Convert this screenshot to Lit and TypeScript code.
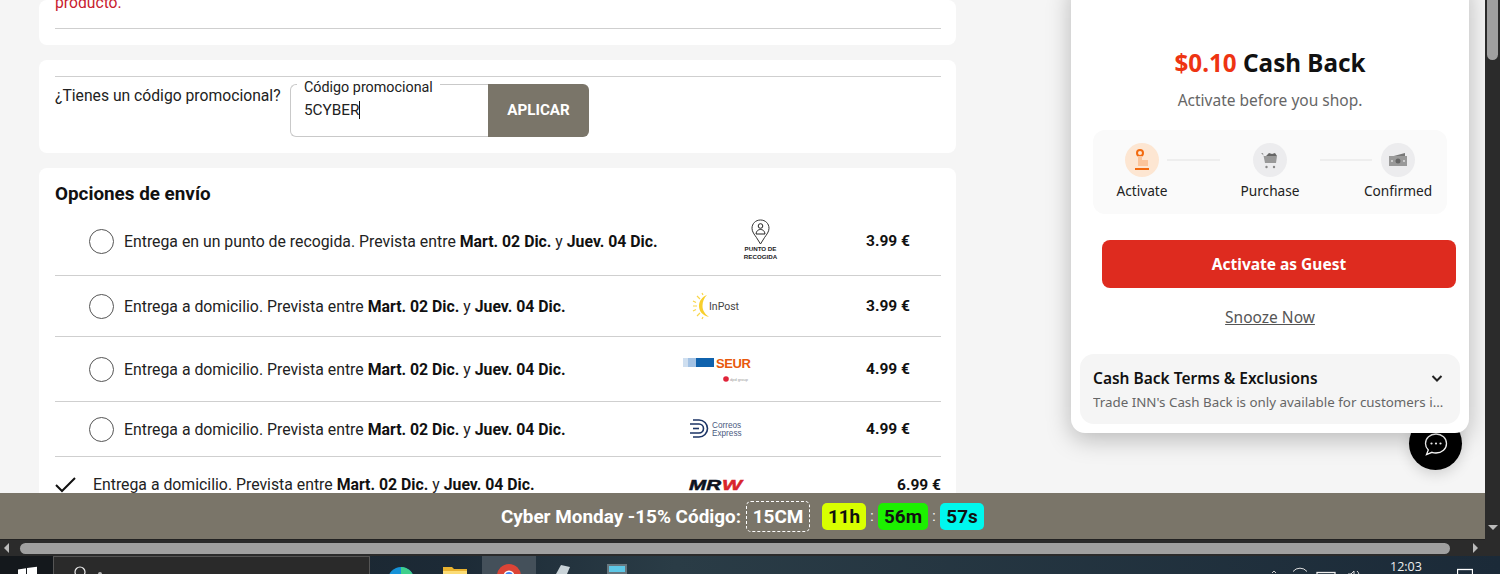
import { LitElement, html, css } from "lit";
import { customElement } from "lit/decorators.js";

const pin = html`<svg class="logo" width="66" height="58" viewBox="0 0 66 58">
  <path d="M31.500 8c-5 0-8.500 3.700-8.500 8.300 0 3.400 2.400 6.300 4.300 9l4.200 6.700 4.200-6.700c1.900-2.700 4.300-5.600 4.300-9C40 11.700 36.500 8 31.500 8z" fill="none" stroke="#333" stroke-width="1"/>
  <circle cx="31.500" cy="14" r="2.300" fill="none" stroke="#222" stroke-width="1"/>
  <path d="M27 22c.5-3.500 2.500-4.500 4.500-4.500s4 1 4.500 4.500z" fill="none" stroke="#222" stroke-width="1"/>
  <text x="31.500" y="39" class="pintx">PUNTO DE</text>
  <text x="31.500" y="47" class="pintx">RECOGIDA</text>
</svg>`;

const inpost = html`<svg class="logo" width="66" height="50" viewBox="0 0 66 50">
  <path d="M24 14c-5 2-8 6-8 11s3 9 10 11c-4-3-6.500-6.500-6.500-11S21 17 24 14z" fill="#f8cf2c"/>
  <path d="M14 15l3 3M10 20l3 1.500M10 25h4M10 30l3-1.500M14 35l3-3M19 38l1-2M19 12l1 2" stroke="#f9d64a" stroke-width="1.200" fill="none"/>
  <text x="26" y="29" class="intx">InPost</text>
</svg>`;

const seur = html`<svg class="logo" width="66" height="54" viewBox="0 0 66 54">
  <rect x="0" y="16" width="5" height="9" fill="#cfdff0"/>
  <rect x="5" y="16" width="8" height="9" fill="#a3c2e4"/>
  <rect x="13" y="16" width="18" height="9" fill="#0f62ad"/>
  <text x="33" y="26" class="setx">SEUR</text>
  <circle cx="43" cy="37" r="2.800" fill="#e0243a"/>
  <text x="47" y="38.500" class="geotx">dpd group</text>
</svg>`;

const correos = html`<svg class="logo" width="52" height="44" viewBox="0 0 52 44">
  <g fill="none" stroke="#1c3566" stroke-width="1.600">
    <path d="M3 13h6a8.500 8.500 0 010 17H3"/>
    <path d="M0 17h9a4.500 4.500 0 010 9H0"/>
    <path d="M3 21.500h6"/>
  </g>
  <text x="22" y="21" class="cotx">Correos</text>
  <text x="22" y="29" class="cotx">Express</text>
</svg>`;

const mrw = html`<svg class="logo" width="54" height="12" viewBox="0 0 54 12">
  <text x="0" y="11" class="mrtx" textLength="32" lengthAdjust="spacingAndGlyphs">MR</text>
  <text x="33" y="11" class="mrtx red" textLength="20" lengthAdjust="spacingAndGlyphs">W</text>
</svg>`;

interface Ship { pre: string; price: string; logo: unknown; }

const ships: Ship[] = [
  { pre: "Entrega en un punto de recogida. Prevista entre", price: "3.99 €", logo: pin },
  { pre: "Entrega a domicilio. Prevista entre", price: "3.99 €", logo: inpost },
  { pre: "Entrega a domicilio. Prevista entre", price: "4.99 €", logo: seur },
  { pre: "Entrega a domicilio. Prevista entre", price: "4.99 €", logo: correos },
];

const dates = html`<b>Mart. 02 Dic.</b> y <b>Juev. 04 Dic.</b>`;

@customElement("app-root")
export class AppRoot extends LitElement {
  static styles = css`
    :host { display: block; width: 1500px; height: 574px; overflow: hidden; font-family: Roboto, "Liberation Sans", sans-serif; color: #111; }
    .screen { display: flex; flex-direction: column; height: 574px; background: #1c262e; }
    .upper { display: flex; height: 540px; }
    .page { width: 1485px; display: flex; flex-direction: column; }
    .main { position: relative; height: 493px; overflow: hidden; background: #f5f5f5; padding-left: 39px; box-sizing: border-box; display: flex; flex-direction: column; gap: 15px; }
    .card { width: 917px; background: #fff; border-radius: 8px; box-sizing: border-box; padding: 0 15px 0 16px; flex: none; }
    .c1 { height: 45px; display: flex; flex-direction: column; justify-content: flex-end; padding-bottom: 16px; }
    .err { color: #c8202e; font-size: 15.700px; line-height: 17px; margin-bottom: 17px; }
    .rule { height: 1px; background: #cfcfcf; flex: none; }
    .c2 { height: 93px; padding-top: 16px; }
    .promo { display: flex; margin-top: 7px; }
    .promo-label { font-size: 15.700px; line-height: 24px; width: 235px; flex: none; white-space: nowrap; color: #222; }
    .field { position: relative; width: 198px; height: 53px; box-sizing: border-box; border: 1px solid #c9c9c9; border-right: none; border-radius: 6px 0 0 6px; font-size: 15.300px; padding: 15px 13px 0; line-height: 20px; color: #222; }
    .legend { position: absolute; top: -6px; left: 6px; padding: 0 7px; background: #fff; font-size: 14.330px; line-height: 16px; color: #222; white-space: nowrap; }
    .caret { display: inline-block; width: 1px; height: 18px; background: #111; vertical-align: -4px; }
    .apply { width: 101px; height: 53px; box-sizing: border-box; padding-bottom: 1px; background: #7a7569; color: #fff; font-weight: 700; font-size: 15.200px; border-radius: 0 6px 6px 0; display: flex; align-items: center; justify-content: center; }
    .c3 { height: 340px; }
    .c3 h2 { margin: 0; padding-top: 16px; height: 23px; font-size: 18.850px; line-height: 20px; font-weight: 700; color: #111; }
    .row { display: flex; align-items: center; padding: 5px 31px 5px 34px; border-bottom: 1px solid #cfcfcf; font-size: 15.820px; color: #222; }
    .row b { color: #111; }
    .radio { width: 25px; height: 25px; box-sizing: border-box; border: 1px solid #555; border-radius: 50%; margin-right: 10px; flex: none; }
    .desc { white-space: nowrap; flex: none; }
    .logo-cell { flex: 1; display: flex; justify-content: center; align-items: center; min-width: 0; }
    .logo { display: block; overflow: visible; }
    .price { font-weight: 700; font-size: 15.500px; white-space: nowrap; flex: none; color: #111; }
    .row.sel { border: none; padding: 18px 0 0; }
    .check { width: 38px; flex: none; display: block; }
    .pintx { font: 700 6.200px "Liberation Sans", sans-serif; text-anchor: middle; fill: #222; }
    .intx { font: 10.500px Roboto, sans-serif; fill: #444; }
    .setx { font: 700 13px "Liberation Sans", sans-serif; fill: #e8590c; letter-spacing: -0.4px; }
    .geotx { font: 4px "Liberation Sans", sans-serif; fill: #999; }
    .cotx { font: 8.200px "Liberation Sans", sans-serif; fill: #4a5a80; }
    .mrtx { font: italic 700 15px "Liberation Sans", sans-serif; fill: #0c1220; stroke: #0c1220; stroke-width: .5px; }
    .mrtx.red { fill: #d8242c; stroke: #d8242c; }

    .pop { position: absolute; left: 1071px; top: -20px; width: 398px; height: 453px; box-sizing: border-box; background: #fff; border-radius: 14px; box-shadow: 0 6px 24px rgba(0,0,0,.25); font-family: "Noto Sans", "Open Sans", sans-serif; padding: 63px 9px 9px; display: flex; flex-direction: column; z-index: 2; }
    .pop h3 { margin: 0; height: 40px; line-height: 40px; font-size: 24.250px; font-weight: 700; text-align: center; color: #111; }
    .pop h3 span { color: #ee3412; }
    .sub { margin-top: 6px; text-align: center; font-size: 15.500px; line-height: 22px; color: #666; }
    .steps { margin: 19px 13px 0; height: 84px; background: #fafafa; border-radius: 12px; display: flex; padding: 13px 0 0 14px; box-sizing: border-box; }
    .step { width: 70px; flex: none; display: flex; flex-direction: column; align-items: center; gap: 4px; font-size: 13.700px; line-height: 20px; color: #222; white-space: nowrap; }
    .step.s2 { margin-left: 15px; }
    .step.s3 { margin-left: -9px; }
    .dot { width: 34px; height: 34px; border-radius: 50%; background: #ececee; display: flex; align-items: center; justify-content: center; }
    .dot.on { background: #fde6d2; }
    .link { height: 2px; background: #eeeeee; margin-top: 16px; flex: none; }
    .link.l1 { width: 53px; margin-left: -10px; }
    .link.l2 { width: 52px; margin-left: 15px; }
    .cta { margin: 26px 4px 0 22px; height: 48px; background: #de2b1f; border-radius: 8px; display: flex; align-items: center; justify-content: center; color: #fff; font-weight: 700; font-size: 15.500px; }
    .snooze { margin-top: 18px; text-align: center; font-size: 15.500px; line-height: 22px; color: #555; text-decoration: underline; }
    .terms { margin-top: 26px; height: 70px; box-sizing: border-box; background: #f5f5f5; border-radius: 14px; padding: 13px 13px 0; }
    .terms-head { display: flex; justify-content: space-between; align-items: center; font-weight: 600; font-size: 15.500px; line-height: 22px; color: #111; }
    .terms p { margin: 4px 0 0; width: 352px; font-size: 13.350px; line-height: 18px; color: #666; white-space: nowrap; overflow: hidden; text-overflow: ellipsis; }
    .chat { position: absolute; left: 1409px; top: 417px; width: 53px; height: 53px; border-radius: 50%; background: #000; display: flex; align-items: center; justify-content: center; box-shadow: 0 4px 14px rgba(0,0,0,.15); z-index: 1; }

    .bar { height: 46px; border-bottom: 1px solid #222; background: #7a7569; display: flex; align-items: center; justify-content: center; color: #fff; font-weight: 700; font-size: 18.900px; }
    .bar-in { display: flex; align-items: center; }
    .code { margin-left: 5px; width: 64px; height: 31px; box-sizing: border-box; border: 1px dashed #fff; border-radius: 5px; display: flex; align-items: center; justify-content: center; }
    .t { height: 27px; border-radius: 5px; display: flex; align-items: center; justify-content: center; color: #111; box-sizing: border-box; }
    .t1 { width: 44px; background: #d8ff00; margin-left: 12px; }
    .t2 { width: 50px; background: #1cf000; }
    .t3 { width: 44px; background: #00f7ee; }
    .sep { width: 12px; text-align: center; font-size: 14px; font-weight: 400; }

    .vs { width: 15px; background: #2b2b2b; display: flex; flex-direction: column; justify-content: space-between; align-items: center; }
    .vthumb { width: 11px; height: 60px; background: #a0a0a0; border-radius: 0 0 6px 6px; }
    .vdown { width: 0; height: 0; border-left: 5px solid transparent; border-right: 5px solid transparent; border-top: 5px solid #bbb; margin-bottom: 10px; }
    .hs { height: 16px; background: #2b2b2b; display: flex; align-items: center; padding: 0 19px 0 4px; box-sizing: border-box; }
    .aleft { width: 0; height: 0; border-top: 5px solid transparent; border-bottom: 5px solid transparent; border-right: 5px solid #bbb; margin-right: 11px; }
    .aright { width: 0; height: 0; border-top: 5px solid transparent; border-bottom: 5px solid transparent; border-left: 5px solid #bbb; margin-left: 23px; }
    .hthumb { width: 1430px; height: 11px; background: #a0a0a0; border-radius: 6px; }

    .task { height: 18px; display: flex; overflow: hidden; background: linear-gradient(90deg, #1a2028 0, #1c2a36 30%, #2a3c46 45%, #1b2a38 100%); color: #eee; }
    .win { width: 53px; flex: none; background: #14181c; }
    .search { width: 317px; flex: none; background: #2a2a2a; border: 1px solid #555; border-bottom: none; box-sizing: border-box; }
    .search svg { display: block; margin: 8px 0 0 18px; }
    .tapps { display: flex; padding-left: 4px; }
    .tapp { width: 54px; height: 18px; flex: none; overflow: hidden; display: flex; justify-content: center; }
    .tapp.act { background: #44505a; }
    .tray { margin-left: auto; display: flex; align-items: flex-start; }
    .clock { font: 12.500px "Open Sans", sans-serif; line-height: 16px; margin: 3px 0 0 20px; width: 30px; white-space: nowrap; }
    .notif { margin-left: 37px; margin-right: 27px; }
  `;

  render() {
    return html`<div class="screen">
      <div class="upper">
        <div class="page">
          <div class="main">
            <div class="card c1"><div class="err">producto.</div><div class="rule"></div></div>
            <div class="card c2">
              <div class="rule"></div>
              <div class="promo">
                <div class="promo-label">¿Tienes un código promocional?</div>
                <div class="field"><span class="legend">Código promocional</span>5CYBER<span class="caret"></span></div>
                <div class="apply">APLICAR</div>
              </div>
            </div>
            <div class="card c3">
              <h2>Opciones de envío</h2>
              ${ships.map(
                (s) => html`<div class="row">
                  <span class="radio"></span>
                  <span class="desc">${s.pre} ${dates}</span>
                  <span class="logo-cell">${s.logo}</span>
                  <span class="price">${s.price}</span>
                </div>`
              )}
              <div class="row sel">
                <svg class="check" width="38" height="18" viewBox="0 0 38 18"><path d="M1 9l6 6L20 2" fill="none" stroke="#111" stroke-width="2"/></svg>
                <span class="desc">Entrega a domicilio. Prevista entre ${dates}</span>
                <span class="logo-cell">${mrw}</span>
                <span class="price">6.99 €</span>
              </div>
            </div>
            <div class="pop">
              <h3><span>$0.10</span> Cash Back</h3>
              <div class="sub">Activate before you shop.</div>
              <div class="steps">
                <div class="step"><div class="dot on">
                  <svg width="20" height="24" viewBox="0 0 20 24"><circle cx="8" cy="5" r="3" fill="none" stroke="#f26a0f" stroke-width="2"/><path d="M6 8h4v4h6v6H6z" fill="#fbc49a"/><rect x="3" y="20" width="14" height="2" fill="#f26a0f"/></svg>
                </div>Activate</div>
                <div class="link l1"></div>
                <div class="step s2"><div class="dot">
                  <svg width="20" height="20" viewBox="0 0 20 20"><path d="M1 3h2l2 10h11l1-7H4" fill="#999"/><path d="M6 6l3-3 3 1 3-1 2 3z" fill="#666"/><circle cx="6.500" cy="17" r="1.200" fill="#888"/><circle cx="14" cy="17" r="1.200" fill="#888"/></svg>
                </div>Purchase</div>
                <div class="link l2"></div>
                <div class="step s3"><div class="dot">
                  <svg width="20" height="18" viewBox="0 0 20 18"><path d="M2 6L17 2v3z" fill="#777"/><rect x="1" y="5" width="18" height="10" fill="#999"/><circle cx="10" cy="10" r="2.500" fill="#666"/><circle cx="4" cy="10" r="1" fill="#ddd"/><circle cx="16" cy="10" r="1" fill="#ddd"/></svg>
                </div>Confirmed</div>
              </div>
              <div class="cta">Activate as Guest</div>
              <div class="snooze">Snooze Now</div>
              <div class="terms">
                <div class="terms-head"><span>Cash Back Terms &amp; Exclusions</span>
                  <svg width="20" height="20" viewBox="0 0 20 20"><path d="M5.500 8l4.500 4.500L14.500 8" fill="none" stroke="#222" stroke-width="2"/></svg>
                </div>
                <p>Trade INN's Cash Back is only available for customers in the countries listed</p>
              </div>
            </div>
            <div class="chat">
              <svg width="26" height="26" viewBox="0 0 26 26"><path d="M13 3c6 0 10.500 4 10.500 9.500S19 22 13 22c-1.500 0-3-.3-4-.7L3.500 23.500l1.800-4.500C3.500 17.300 2.500 15 2.500 12.500 2.500 7 7 3 13 3z" fill="none" stroke="#fff" stroke-width="1.300"/><circle cx="8.500" cy="12.500" r="1.100" fill="#fff"/><circle cx="13" cy="12.500" r="1.100" fill="#fff"/><circle cx="17.500" cy="12.500" r="1.100" fill="#fff"/></svg>
            </div>
          </div>
          <div class="bar">
            <div class="bar-in">
              <span>Cyber Monday -15% Código:</span>
              <span class="code">15CM</span>
              <span class="t t1">11h</span><span class="sep">:</span>
              <span class="t t2">56m</span><span class="sep">:</span>
              <span class="t t3">57s</span>
            </div>
          </div>
        </div>
        <div class="vs"><div class="vthumb"></div><div class="vdown"></div></div>
      </div>
      <div class="hs"><div class="aleft"></div><div class="hthumb"></div><div class="aright"></div></div>
      <div class="task">
        <div class="win"><svg width="53" height="18" viewBox="0 0 53 18"><path d="M18 13.500l8-1.200V18h-8zM27 12.100l10-1.400V18H27z" fill="#fff"/></svg></div>
        <div class="search"><svg width="30" height="10" viewBox="0 0 30 10"><circle cx="8" cy="7" r="5" fill="none" stroke="#eee" stroke-width="1.200"/><circle cx="28" cy="9" r="2" fill="#bbb"/></svg></div>
        <div class="tapps">
          <div class="tapp"><svg width="28" height="18" viewBox="0 0 28 18"><circle cx="14" cy="24" r="13" fill="#1592d8"/><path d="M14 11a13 13 0 0113 13H14z" fill="#3fd08c"/></svg></div>
          <div class="tapp"><svg width="26" height="18" viewBox="0 0 26 18"><path d="M1 18V11h9l2 2h13v5z" fill="#e9b22f"/><rect x="1" y="15" width="24" height="3" fill="#fbdc76"/></svg></div>
          <div class="tapp act"><svg width="26" height="18" viewBox="0 0 26 18"><circle cx="13" cy="20" r="12" fill="#dc4436"/><circle cx="13" cy="20" r="5.500" fill="#fff"/><circle cx="13" cy="20" r="4" fill="#4285f4"/></svg></div>
          <div class="tapp"><svg width="26" height="18" viewBox="0 0 26 18"><path d="M6 18l5-9 9 2-3 7z" fill="#c9d3d8"/></svg></div>
          <div class="tapp"><svg width="22" height="18" viewBox="0 0 22 18"><rect x="1" y="8" width="20" height="10" fill="#66767e"/><rect x="3" y="10" width="16" height="6" fill="#5ec7e6"/></svg></div>
        </div>
        <div class="tray">
          <svg width="100" height="18" viewBox="0 0 100 18"><path d="M2 17l2-2 2 2" fill="none" stroke="#ccc"/><path d="M23 15.500a9 9 0 0114 0" fill="none" stroke="#ddd"/><rect x="47" y="16.500" width="18" height="6" fill="none" stroke="#eee" stroke-width="1.300"/><path d="M78 18h3l3-3v6M87 15a5 5 0 012 4" fill="none" stroke="#ddd"/></svg>
          <div class="clock">12:03</div>
          <svg class="notif" width="16" height="18" viewBox="0 0 16 18"><rect x="0.500" y="13.500" width="15" height="8" fill="none" stroke="#fff" stroke-width="1.300"/></svg>
        </div>
      </div>
    </div>`;
  }
}
